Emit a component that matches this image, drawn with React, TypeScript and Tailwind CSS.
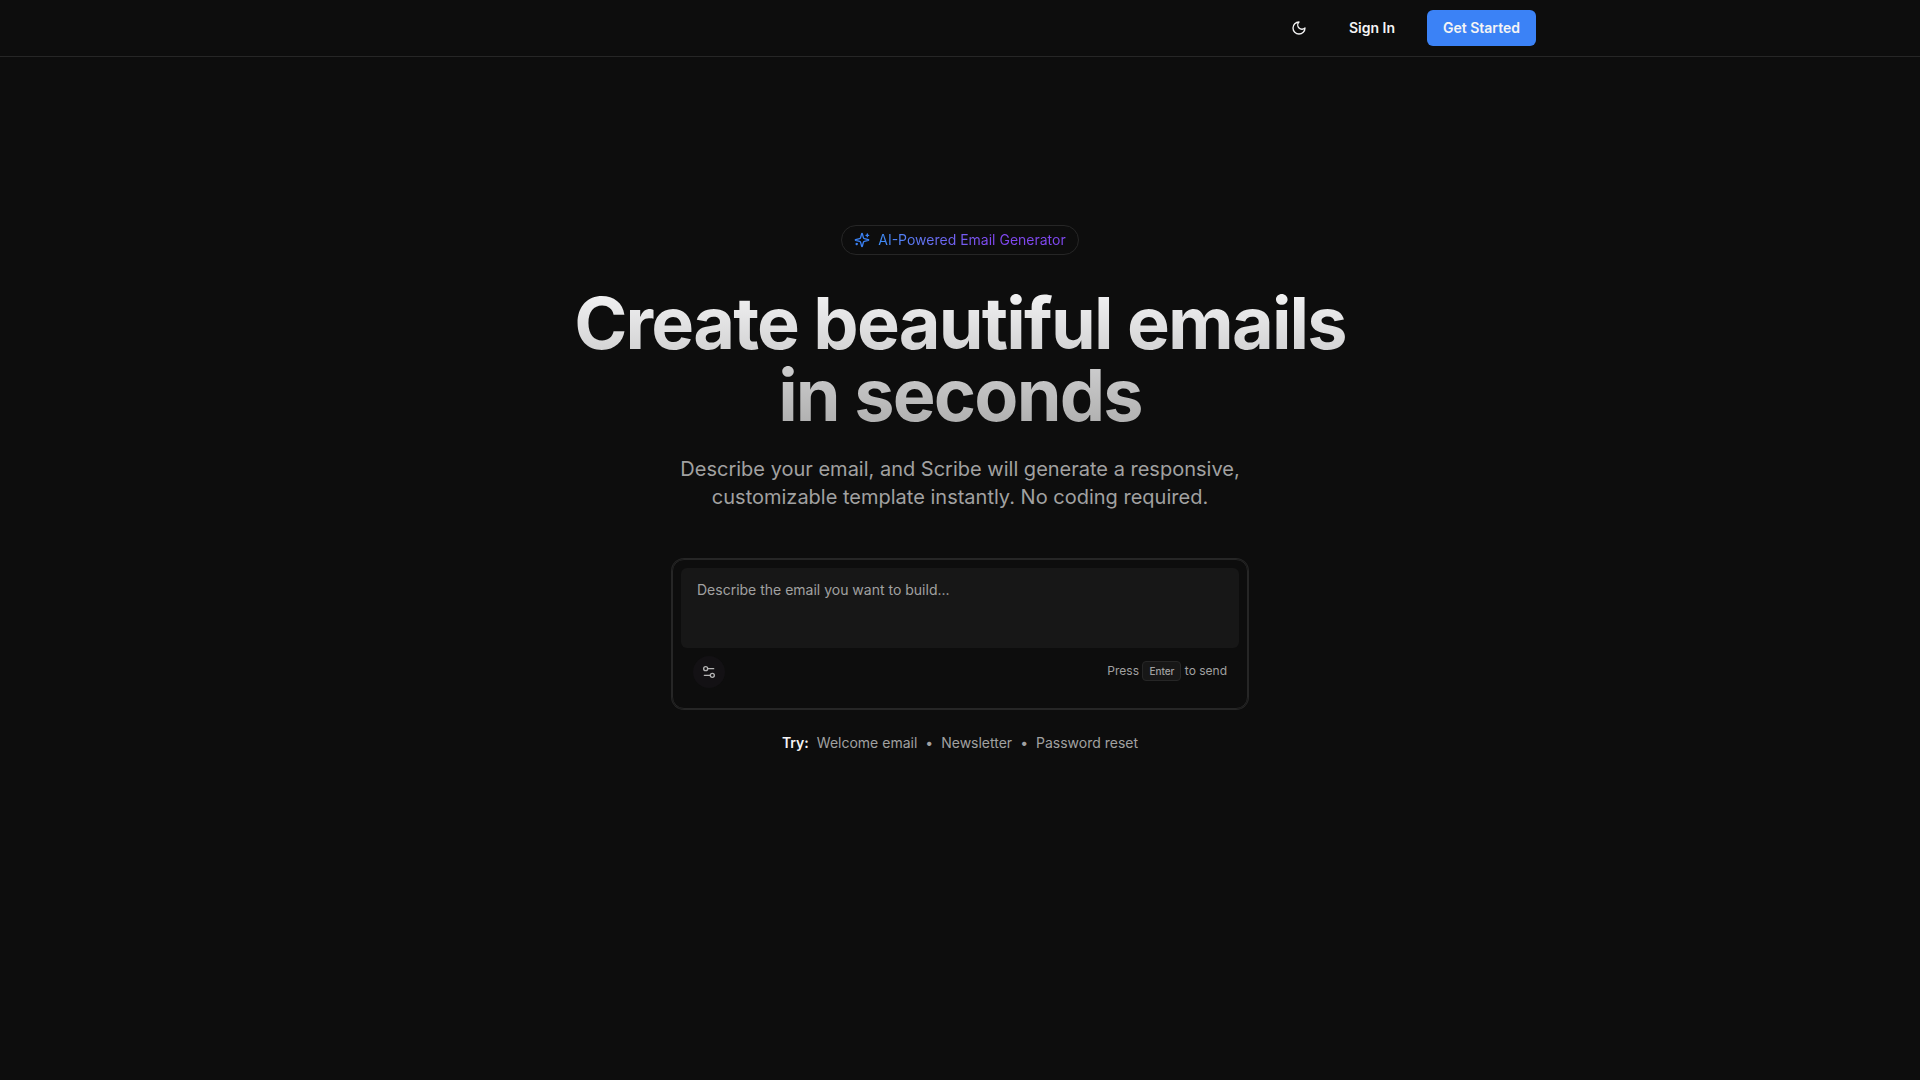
import { Settings2 } from "lucide-react";
import { Fragment, type ReactNode } from "react";

const suggestions = ["Welcome email", "Newsletter", "Password reset"];

function Icon({ className, children }: { className: string; children: ReactNode }) {
  return (
    <svg
      viewBox="0 0 24 24"
      fill="none"
      stroke="currentColor"
      strokeWidth="2"
      strokeLinecap="round"
      strokeLinejoin="round"
      aria-hidden="true"
      className={className}
    >
      {children}
    </svg>
  );
}

function SparklesIcon() {
  return (
    <Icon className="size-4 text-[#3b82f6]">
      <path d="M9.937 15.5A2 2 0 0 0 8.5 14.063l-6.135-1.582a.5.5 0 0 1 0-.962L8.5 9.936A2 2 0 0 0 9.937 8.5l1.582-6.135a.5.5 0 0 1 .963 0L14.063 8.5A2 2 0 0 0 15.5 9.937l6.135 1.581a.5.5 0 0 1 0 .964L15.5 14.063a2 2 0 0 0-1.437 1.437l-1.582 6.135a.5.5 0 0 1-.963 0z" />
      <path d="M20 3v4" />
      <path d="M22 5h-4" />
      <path d="M4 17v2" />
      <path d="M5 18H3" />
    </Icon>
  );
}

function MoonIcon() {
  return (
    <Icon className="size-4">
      <path d="M12 3a6 6 0 0 0 9 9 9 9 0 1 1-9-9Z" />
    </Icon>
  );
}

function Header() {
  return (
    <header className="border-b border-[#262626]">
      <nav className="mx-auto flex h-14 max-w-6xl items-center justify-end gap-4">
        <button
          type="button"
          aria-label="Toggle theme"
          className="flex size-9 items-center justify-center rounded-md"
        >
          <MoonIcon />
        </button>
        <a href="#sign-in" className="flex h-9 items-center rounded-md px-4 text-sm font-semibold">
          Sign In
        </a>
        <a href="#get-started" className="flex h-9 items-center rounded-md bg-[#3b82f6] px-4 text-sm font-semibold">
          Get Started
        </a>
      </nav>
    </header>
  );
}

function PromptCard() {
  return (
    <form className="w-full max-w-xl rounded-xl border border-[#262626] p-2 text-left ring-1 ring-[#262626]">
      <textarea
        aria-label="Email description"
        placeholder="Describe the email you want to build..."
        className="block h-20 w-full resize-none rounded-md bg-[#171717] px-4 py-3 text-sm outline-none placeholder:text-[#a1a1a1]"
      />
      <div className="flex items-start justify-between px-3 pt-2 pb-3">
        <button
          type="button"
          aria-label="Options"
          className="flex size-8 items-center justify-center rounded-full bg-[#131114] text-[#b4b4b4]"
        >
          <Settings2 className="size-4" />
        </button>
        <p className="pt-[5px] text-xs text-[#a1a1a1]">
          Press{" "}
          <kbd className="inline-block rounded border border-[#262626] bg-[#171717] px-1.5 py-0.5 font-[Inter] text-[10px] leading-[14px] font-medium">
            Enter
          </kbd>{" "}
          to send
        </p>
      </div>
    </form>
  );
}

export default function App() {
  return (
    <div className="min-h-screen bg-[#0d0d0d] font-[Inter,sans-serif] text-[#f4f4f5]">
      <Header />
      <main className="flex flex-col items-center px-4 pt-42 text-center">
        <div className="flex items-center gap-2 rounded-full border border-[#262626] px-3 py-1 text-sm">
          <SparklesIcon />
          <span className="bg-linear-to-r from-[#3b8cf6] to-[#8048f0] to-60% bg-clip-text text-transparent">
            AI-Powered Email Generator
          </span>
        </div>
        <h1 className="mt-8 bg-linear-to-b from-[#f4f4f5] to-[#adadad] bg-clip-text text-7xl leading-none font-bold tracking-tight text-transparent">
          Create beautiful emails
          <br />
          in seconds
        </h1>
        <p className="mt-6 mb-12 max-w-xl text-xl leading-7 text-[#a1a1a1]">
          Describe your email, and Scribe will generate a responsive, customizable template instantly. No coding
          required.
        </p>
        <PromptCard />
        <div className="mt-6 flex items-center gap-2 text-sm text-[#a1a1a1]">
          <span className="font-semibold text-[#f4f4f5]">Try:</span>
          {suggestions.map((label, i) => (
            <Fragment key={label}>
              {i > 0 && <span>•</span>}
              <button type="button">{label}</button>
            </Fragment>
          ))}
        </div>
      </main>
    </div>
  );
}
